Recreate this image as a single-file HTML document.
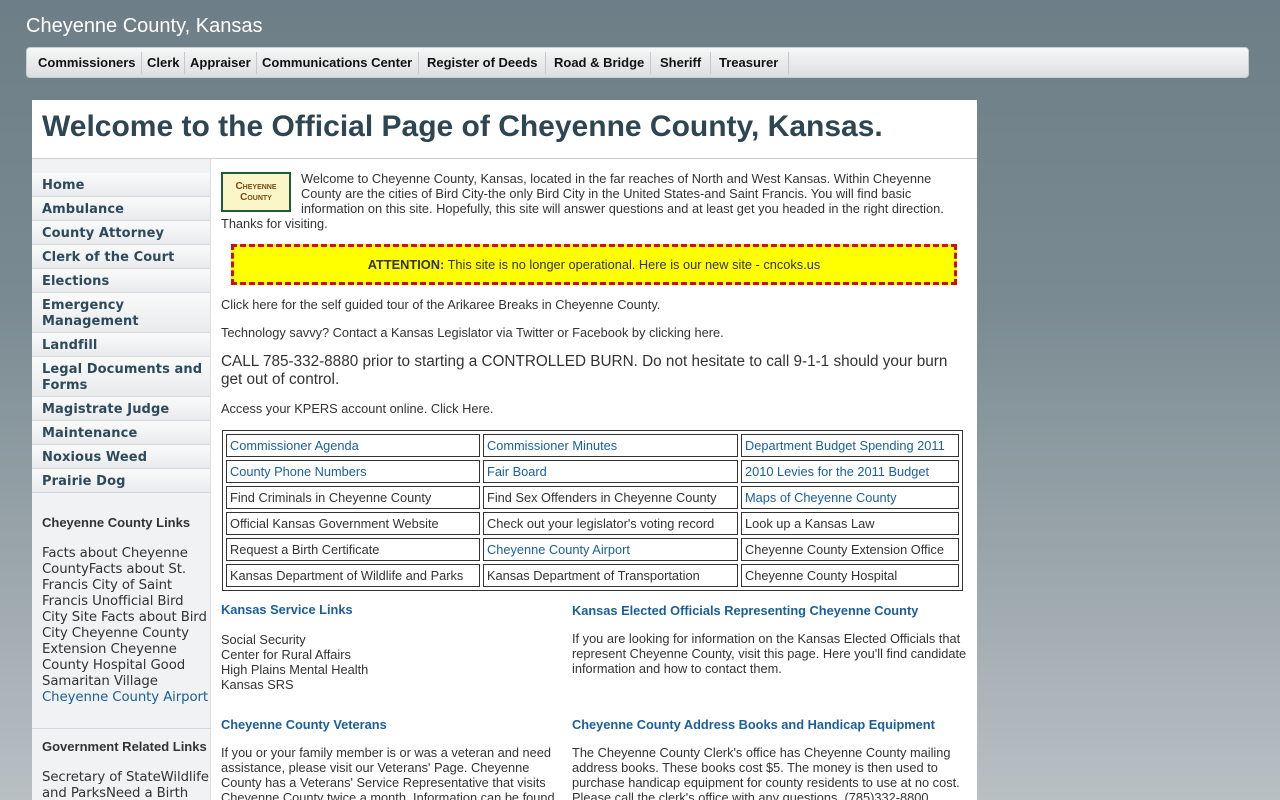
<!DOCTYPE html>
<html style="overflow:hidden"><head><style>
html,body{overflow:hidden}
body{margin:0;width:1280px;height:800px;background:linear-gradient(#6e7e87 0,#7a8a92 300px,#b8c0c4 800px);font-family:"Liberation Sans",Arial,sans-serif;font-size:12.8px;color:#333;position:relative}
.site{position:absolute;left:26px;top:15px;color:#fff;font-size:20px}
.nav{position:absolute;left:26px;top:47px;width:1223px;height:31px;border:1px solid #c8cdd0;border-radius:4px;background:linear-gradient(#f6f7f7,#dcdfe0);box-sizing:border-box}
.nav span{position:absolute;top:7px;font-weight:bold;font-size:13px;color:#111}
.nav i{position:absolute;top:4px;width:1px;height:22px;background:#c5c9cb}
.main{position:absolute;left:32px;top:100px;width:945px;height:700px;background:#fff}
h1{margin:0;position:absolute;left:10px;top:10px;font-size:30px;color:#2e4653;font-weight:bold;white-space:nowrap}
.hr{position:absolute;left:0;top:58px;width:945px;height:1px;background:#ccc}
.side{position:absolute;left:0;top:59px;width:178px;height:641px;background:#f0f2f3;border-right:1px solid #ddd;font-family:"DejaVu Sans",Verdana,sans-serif}
.side .it{position:absolute;left:0;width:178px;background:linear-gradient(#fafafa,#e9ebec);border-bottom:1px solid #d5d8da;box-sizing:border-box;padding-left:10px;font-weight:bold;color:#2d4a5c;font-size:13px;line-height:16px;padding-top:5px;letter-spacing:.1px}
.side h4{position:absolute;left:10px;margin:0;font-family:"Liberation Sans",Arial,sans-serif;font-size:13px;color:#333;font-weight:bold}
.side p{position:absolute;left:10px;margin:0;width:166px;font-size:13.3px;line-height:16px;color:#333;letter-spacing:-.1px}
a{color:#1a5f9a;text-decoration:none}
.c{position:absolute;font-size:12.8px;line-height:15px}
.att{position:absolute;left:199px;top:144px;width:726px;height:41px;background:#ff0;border:3px dashed #d01010;box-sizing:border-box;text-align:center;line-height:35px;font-size:12.8px}
table{position:absolute;left:190px;top:330px;width:741px;border:1px solid #333;border-spacing:3px;font-size:12.8px}
td{border:1px solid #333;height:21px;padding:0 3px;white-space:nowrap}
.hd{font-weight:bold;color:#1a5f9a;font-size:12.8px}
</style></head><body>
<div class="site">Cheyenne County, Kansas</div>
<div class="nav">
<span style="left:11px">Commissioners</span><i style="left:114px"></i>
<span style="left:120px">Clerk</span><i style="left:157px"></i>
<span style="left:163px">Appraiser</span><i style="left:229px"></i>
<span style="left:235px">Communications Center</span><i style="left:391px"></i>
<span style="left:400px">Register of Deeds</span><i style="left:518px"></i>
<span style="left:527px">Road &amp; Bridge</span><i style="left:623px"></i>
<span style="left:633px">Sheriff</span><i style="left:683px"></i>
<span style="left:692px">Treasurer</span><i style="left:761px"></i>
</div>
<div class="main">
<h1>Welcome to the Official Page of Cheyenne County, Kansas.</h1>
<div class="hr"></div>
<div class="side">
<div class="it" style="top:14px;height:24px">Home</div>
<div class="it" style="top:38px;height:24px">Ambulance</div>
<div class="it" style="top:62px;height:24px">County Attorney</div>
<div class="it" style="top:86px;height:24px">Clerk of the Court</div>
<div class="it" style="top:110px;height:24px">Elections</div>
<div class="it" style="top:134px;height:40px">Emergency<br>Management</div>
<div class="it" style="top:174px;height:24px">Landfill</div>
<div class="it" style="top:198px;height:40px">Legal Documents and<br>Forms</div>
<div class="it" style="top:238px;height:24px">Magistrate Judge</div>
<div class="it" style="top:262px;height:24px">Maintenance</div>
<div class="it" style="top:286px;height:24px">Noxious Weed</div>
<div class="it" style="top:310px;height:24px">Prairie Dog</div>
<h4 style="top:356px">Cheyenne County Links</h4>
<p style="top:387px">Facts about Cheyenne CountyFacts about St. Francis City of Saint Francis Unofficial Bird City Site Facts about Bird City Cheyenne County Extension Cheyenne County Hospital Good Samaritan Village <a href="#" style="white-space:nowrap">Cheyenne County Airport</a></p>
<div style="position:absolute;left:0;top:569px;width:178px;height:1px;background:#d5d8da"></div>
<h4 style="top:580px">Government Related Links</h4>
<p style="top:611px;width:172px">Secretary of StateWildlife and ParksNeed a Birth</p>
</div>
<div style="position:absolute;left:189px;top:72px;width:70px;height:40px;background:#fbf6c8;border:2px solid #1f5a3a;box-sizing:border-box;text-align:center;color:#7a4a10;font-size:10px;line-height:11px;padding-top:7px;font-weight:bold;font-variant:small-caps">Cheyenne<br>County</div>
<div class="c" style="left:269px;top:71px;width:650px">Welcome to Cheyenne County, Kansas, located in the far reaches of North and West Kansas. Within Cheyenne County are the cities of Bird City-the only Bird City in the United States-and Saint Francis. You will find basic information on this site. Hopefully, this site will answer questions and at least get you headed in the right direction.</div>
<div class="c" style="left:189px;top:116px">Thanks for visiting.</div>
<div class="att"><b>ATTENTION:</b> This site is no longer operational. Here is our new site - cncoks.us</div>
<div class="c" style="left:189px;top:197px">Click here for the self guided tour of the Arikaree Breaks in Cheyenne County.</div>
<div class="c" style="left:189px;top:225px">Technology savvy? Contact a Kansas Legislator via Twitter or Facebook by clicking here.</div>
<div class="c" style="left:189px;top:253px;font-size:15.3px;line-height:18px;width:740px">CALL 785-332-8880 prior to starting a CONTROLLED BURN. Do not hesitate to call 9-1-1 should your burn get out of control.</div>
<div class="c" style="left:189px;top:301px">Access your KPERS account online. Click Here.</div>
<table>
<tr><td style="width:246px"><a href="#">Commissioner Agenda</a></td><td style="width:247px"><a href="#">Commissioner Minutes</a></td><td><a href="#">Department Budget Spending 2011</a></td></tr>
<tr><td><a href="#">County Phone Numbers</a></td><td><a href="#">Fair Board</a></td><td><a href="#">2010 Levies for the 2011 Budget</a></td></tr>
<tr><td>Find Criminals in Cheyenne County</td><td>Find Sex Offenders in Cheyenne County</td><td><a href="#">Maps of Cheyenne County</a></td></tr>
<tr><td>Official Kansas Government Website</td><td>Check out your legislator's voting record</td><td>Look up a Kansas Law</td></tr>
<tr><td>Request a Birth Certificate</td><td><a href="#">Cheyenne County Airport</a></td><td>Cheyenne County Extension Office</td></tr>
<tr><td>Kansas Department of Wildlife and Parks</td><td>Kansas Department of Transportation</td><td>Cheyenne County Hospital</td></tr>
</table>
<div class="c hd" style="left:189px;top:502px">Kansas Service Links</div>
<div class="c" style="left:189px;top:532px">Social Security<br>Center for Rural Affairs<br>High Plains Mental Health<br>Kansas SRS</div>
<div class="c hd" style="left:540px;top:503px">Kansas Elected Officials Representing Cheyenne County</div>
<div class="c" style="left:540px;top:531px;width:400px">If you are looking for information on the Kansas Elected Officials that represent Cheyenne County, visit this page. Here you'll find candidate information and how to contact them.</div>
<div class="c hd" style="left:189px;top:617px">Cheyenne County Veterans</div>
<div class="c" style="left:189px;top:645px;width:345px">If you or your family member is or was a veteran and need assistance, please visit our Veterans' Page. Cheyenne County has a Veterans' Service Representative that visits Cheyenne County twice a month. Information can be found</div>
<div class="c hd" style="left:540px;top:617px">Cheyenne County Address Books and Handicap Equipment</div>
<div class="c" style="left:540px;top:645px;width:395px">The Cheyenne County Clerk's office has Cheyenne County mailing address books. These books cost $5. The money is then used to purchase handicap equipment for county residents to use at no cost. Please call the clerk's office with any questions. (785)332-8800</div>
</div>
</body></html>
